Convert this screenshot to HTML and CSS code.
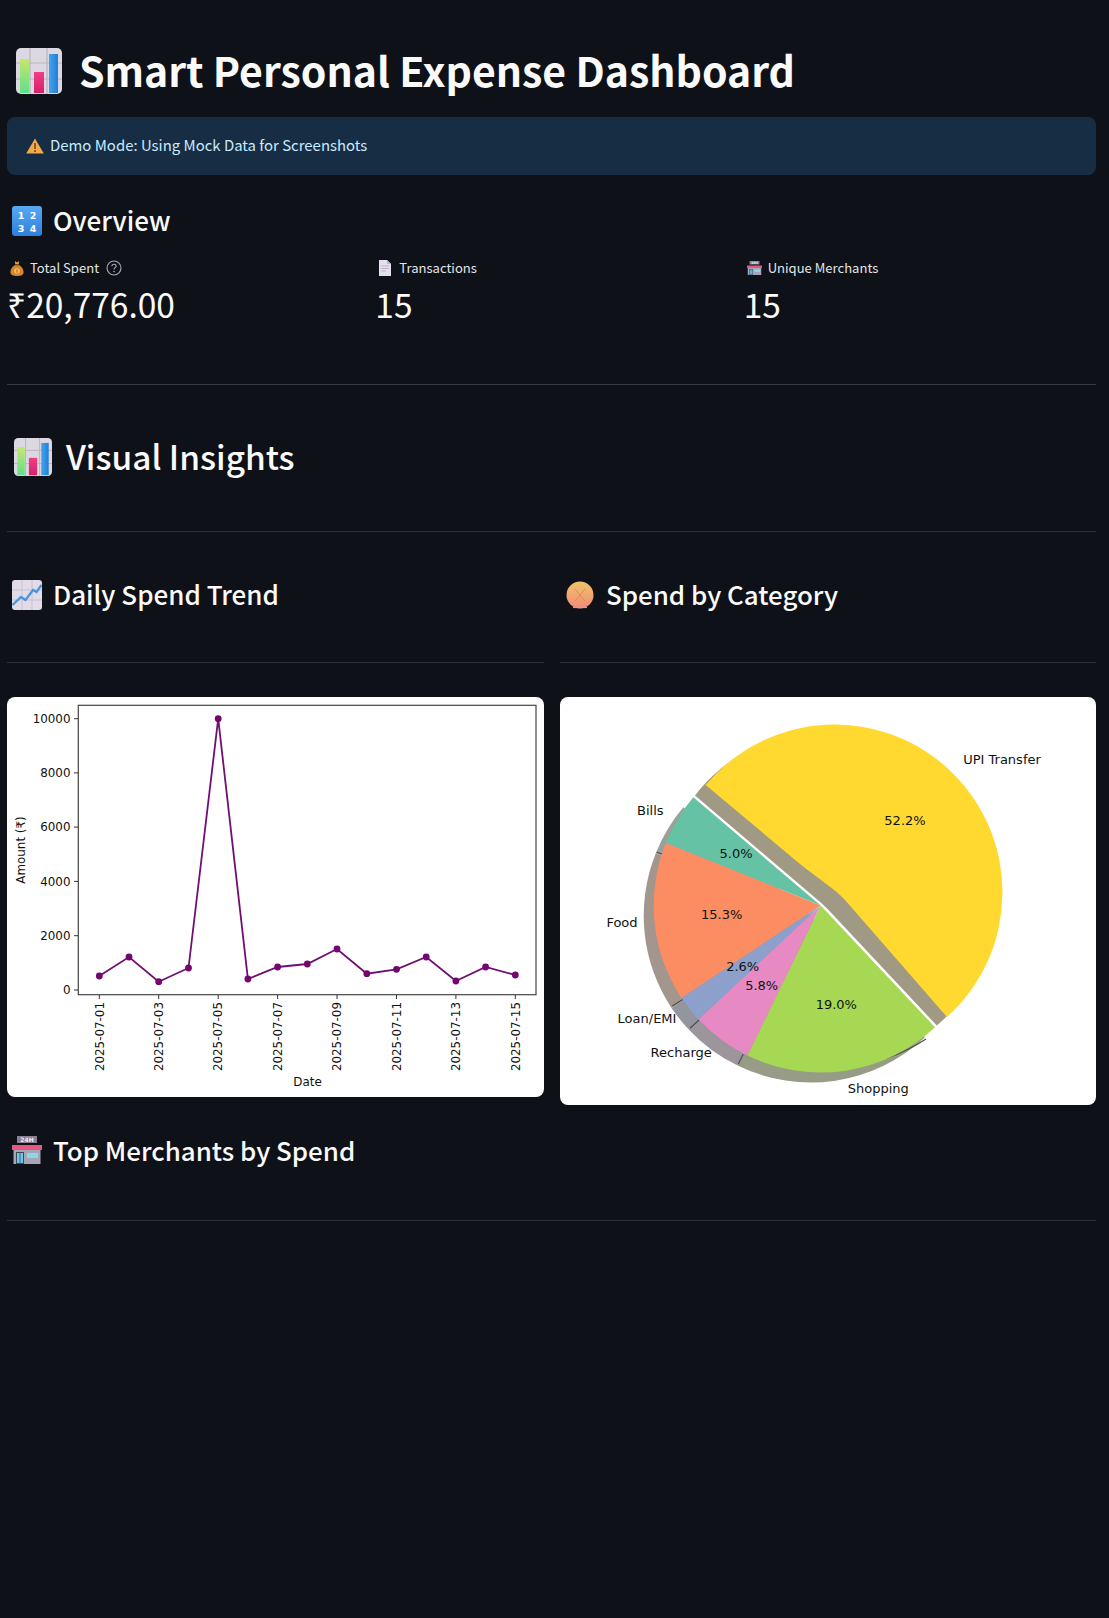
FILE: index.html
```html
<!DOCTYPE html>
<html lang="en">
<head>
<meta charset="utf-8">
<title>Smart Personal Expense Dashboard</title>
<link rel="stylesheet" href="styles.css">
</head>
<body>
<svg class="defs" width="0" height="0" aria-hidden="true">
  <defs>
    <linearGradient id="gGreen" x1="0" y1="0" x2="0" y2="1"><stop offset="0" stop-color="#c6e86a"/><stop offset="1" stop-color="#5fe08a"/></linearGradient>
    <linearGradient id="gPink" x1="0" y1="0" x2="0" y2="1"><stop offset="0" stop-color="#ef3f86"/><stop offset="1" stop-color="#d81f6a"/></linearGradient>
    <linearGradient id="gBlue" x1="0" y1="0" x2="1" y2="0"><stop offset="0" stop-color="#45a4f0"/><stop offset="1" stop-color="#1f7fd6"/></linearGradient>
    <linearGradient id="gKey" x1="0" y1="0" x2="0" y2="1"><stop offset="0" stop-color="#58a9f2"/><stop offset="1" stop-color="#2f7fdc"/></linearGradient>
    <linearGradient id="gPie" x1="0" y1="0" x2="0" y2="1"><stop offset="0" stop-color="#f0c468"/><stop offset="1" stop-color="#f58a78"/></linearGradient>
    <symbol id="e-chart" viewBox="0 0 46 46">
      <rect x="0" y="0" width="46" height="46" rx="5" fill="#dcd8e2"/>
      <path d="M14 0V46M31 0V46M0 15H46M0 31H46" stroke="#b9b5c0" stroke-width="1.2"/>
      <rect x="4" y="11" width="9" height="34" fill="url(#gGreen)"/>
      <rect x="18" y="24" width="10" height="21" fill="url(#gPink)"/>
      <rect x="33" y="6" width="9" height="39" fill="url(#gBlue)"/>
    </symbol>
    <symbol id="e-money" viewBox="0 0 14 16">
      <path d="M5 1 7 2.6 9 1 8.8 4.6H5.2Z" fill="#e9a23b"/>
      <path d="M5 5C2 7 0.4 9.5 0.4 12 0.4 15 3 16 7 16S13.6 15 13.6 12C13.6 9.5 12 7 9 5Z" fill="#d98430"/>
      <rect x="5" y="4.3" width="4" height="1.2" fill="#7a4520"/>
      <circle cx="7" cy="11" r="2.8" fill="#f6c552"/>
      <path d="M7 9.3V12.8" stroke="#a05a1c" stroke-width="1"/>
    </symbol>
    <symbol id="e-doc" viewBox="0 0 12 16">
      <path d="M0 0H8L12 4V16H0Z" fill="#e6e0ee"/>
      <path d="M8 0V4H12Z" fill="#bdb5c9"/>
      <path d="M2 6H10M2 8.5H10M2 11H7" stroke="#bdb5c9" stroke-width="1"/>
    </symbol>
    <symbol id="e-store" viewBox="0 0 30 28">
      <rect x="5" y="0" width="20" height="7" fill="#8a7f92"/>
      <rect x="0" y="9" width="30" height="5" fill="#e5587f"/>
      <rect x="1.5" y="14" width="27" height="14" fill="#a9a4b5"/>
      <rect x="4" y="16" width="8" height="12" fill="#3f4654"/>
      <rect x="5" y="17" width="2.6" height="10" fill="#6dc8ee"/>
      <rect x="8.4" y="17" width="2.6" height="10" fill="#6dc8ee"/>
      <rect x="15" y="17" width="11" height="5" fill="#84dbe8"/>
      <text x="15" y="6" class="e-24h">24H</text>
    </symbol>
    <symbol id="e-trend" viewBox="0 0 30 30">
      <rect width="30" height="30" rx="3" fill="#e2dbe8"/>
      <path d="M10 0V30M20 0V30M0 10H30M0 20H30" stroke="#c9c1d2" stroke-width="1"/>
      <path d="M0.5 25 9 17 13.5 20 21 10 24.5 12 29.5 5" fill="none" stroke="#4b93d8" stroke-width="2.2"/>
    </symbol>
    <symbol id="e-pie" viewBox="0 0 28 28">
      <circle cx="14" cy="14" r="13.5" fill="url(#gPie)"/>
      <path d="M9 8 19 20M19 8 9 20" stroke="#d9805f" stroke-width="0.8"/>
      <path d="M7 26.5H21" stroke="#b9a9b5" stroke-width="1.2"/>
    </symbol>
    <symbol id="e-warn" viewBox="0 0 18 16">
      <path d="M9 0.5 17.8 15.5H0.2Z" fill="#f5a84a"/>
      <path d="M9 5V11" stroke="#6b4a22" stroke-width="1.6"/>
      <circle cx="9" cy="13" r="1" fill="#6b4a22"/>
    </symbol>
    <symbol id="e-keys" viewBox="0 0 30 30">
      <rect width="30" height="30" rx="3" fill="url(#gKey)"/>
      <text x="9" y="12.5" class="e-key">1</text><text x="21" y="12.5" class="e-key">2</text>
      <text x="9" y="25.5" class="e-key">3</text><text x="21" y="25.5" class="e-key">4</text>
    </symbol>
  </defs>
</svg>

<main class="page">
  <h1 class="title"><svg class="ico-title"><use href="#e-chart"/></svg><span>Smart Personal Expense Dashboard</span></h1>

  <div class="alert"><svg class="ico-warn"><use href="#e-warn"/></svg><span>Demo Mode: Using Mock Data for Screenshots</span></div>

  <h3 class="sub sub-overview"><svg class="ico-sub"><use href="#e-keys"/></svg><span>Overview</span></h3>

  <section class="metrics">
    <div class="metric">
      <div class="metric-label"><svg class="ico-money"><use href="#e-money"/></svg><span>Total Spent</span>
        <svg class="help" viewBox="0 0 16 16"><circle cx="8" cy="8" r="7" fill="none" stroke="#a9abb1" stroke-width="1.1"/><path d="M5.9 6.3C5.9 5 6.9 4.3 8 4.3S10.1 5 10.1 6.2C10.1 7.6 8 7.7 8 9.4" fill="none" stroke="#a9abb1" stroke-width="1.1"/><circle cx="8" cy="11.5" r=".8" fill="#a9abb1"/></svg>
      </div>
      <div class="metric-value">₹20,776.00</div>
    </div>
    <div class="metric">
      <div class="metric-label"><svg class="ico-doc"><use href="#e-doc"/></svg><span>Transactions</span></div>
      <div class="metric-value">15</div>
    </div>
    <div class="metric">
      <div class="metric-label"><svg class="ico-store"><use href="#e-store"/></svg><span>Unique Merchants</span></div>
      <div class="metric-value">15</div>
    </div>
  </section>

  <hr class="rule rule-metrics">

  <h2 class="section"><svg class="ico-section"><use href="#e-chart"/></svg><span>Visual Insights</span></h2>

  <hr class="rule rule-section">

  <section class="columns">
    <div class="col">
      <h3 class="sub"><svg class="ico-sub"><use href="#e-trend"/></svg><span>Daily Spend Trend</span></h3>
      <hr class="rule rule-sub">
      <div class="plot plot-line">
        <svg class="chart" viewBox="7 697 537 400">
          <g class="spine">
            <rect x="78.3" y="705.3" width="457.7" height="289.4"/>
          </g>
          <path class="ticks" d="M78 990h-4M78 935.7h-4M78 881.4h-4M78 827.1h-4M78 772.9h-4M78 718.7h-4M99.3 995v4M158.7 995v4M218.2 995v4M277.6 995v4M337 995v4M396.5 995v4M455.9 995v4M515.3 995v4"/>
          <g class="tl tl-y">
            <text x="70.5" y="994.3">0</text>
            <text x="70.5" y="940">2000</text>
            <text x="70.5" y="885.7">4000</text>
            <text x="70.5" y="831.4">6000</text>
            <text x="70.5" y="777.2">8000</text>
            <text x="70.5" y="723">10000</text>
          </g>
          <g class="tl tl-x">
            <text transform="translate(103.5 1002) rotate(-90)">2025-07-01</text>
            <text transform="translate(162.9 1002) rotate(-90)">2025-07-03</text>
            <text transform="translate(222.4 1002) rotate(-90)">2025-07-05</text>
            <text transform="translate(281.8 1002) rotate(-90)">2025-07-07</text>
            <text transform="translate(341.2 1002) rotate(-90)">2025-07-09</text>
            <text transform="translate(400.7 1002) rotate(-90)">2025-07-11</text>
            <text transform="translate(460.1 1002) rotate(-90)">2025-07-13</text>
            <text transform="translate(519.5 1002) rotate(-90)">2025-07-15</text>
          </g>
          <text class="axis-label" x="307.5" y="1086.3">Date</text>
          <text class="axis-label" transform="translate(25.3 850) rotate(-90)">Amount (₹)</text>
          <polyline class="series" points="99.3,976 129,957 158.7,981.7 188.5,968 218.2,718.7 247.9,979 277.6,967 307.3,964 337,949 366.8,973.7 396.5,969.3 426.2,957 455.9,981 485.6,967 515.3,975"/>
          <g class="dots">
            <circle cx="99.3" cy="976"/><circle cx="129" cy="957"/><circle cx="158.7" cy="981.7"/><circle cx="188.5" cy="968"/><circle cx="218.2" cy="718.7"/><circle cx="247.9" cy="979"/><circle cx="277.6" cy="967"/><circle cx="307.3" cy="964"/><circle cx="337" cy="949"/><circle cx="366.8" cy="973.7"/><circle cx="396.5" cy="969.3"/><circle cx="426.2" cy="957"/><circle cx="455.9" cy="981"/><circle cx="485.6" cy="967"/><circle cx="515.3" cy="975"/>
          </g>
        </svg>
      </div>
    </div>
    <div class="col">
      <h3 class="sub sub-pie"><svg class="ico-pie"><use href="#e-pie"/></svg><span>Spend by Category</span></h3>
      <hr class="rule rule-sub">
      <div class="plot plot-pie">
        <svg class="chart" viewBox="560 697 536 408">
          <g class="shadows">
            <path class="sh-upi" d="M695 795.4L816 898.5Q823 904 829 910.5L936.8 1025.6A167.8 167.8 0 1 0 695 795.4Z"/>
            <path class="sh-slice" d="M810.7 915.5L683.3 807.3A167 167 0 0 0 655.9 853Z"/>
            <path class="sh-food" d="M810.7 915.5L655.9 853A167 167 0 0 0 671.5 1007.9Z"/>
            <path class="sh-loan" d="M810.7 915.5L671.5 1007.9A167 167 0 0 0 688.7 1029.5Z"/>
            <path class="sh-rech" d="M810.7 915.5L688.7 1029.5A167 167 0 0 0 737.5 1065.6Z"/>
            <path class="sh-shop" d="M810.7 915.5L737.5 1065.6A167 167 0 0 0 925 1037.3Z"/>
          </g>
          <path class="tick-dark" d="M656.7 852.3 662 854M672.3 1006 683.3 999.3M690 1028.3 699 1020M738.3 1064 743.3 1054M926 1039A167 167 0 0 1 887 1058"/>
          <path class="w-bills" d="M820.7 905.5L693.3 797.3A167 167 0 0 0 665.9 843Z"/>
          <path class="w-food" d="M820.7 905.5L665.9 843A167 167 0 0 0 681.5 997.9Z"/>
          <path class="w-loan" d="M820.7 905.5L681.5 997.9A167 167 0 0 0 698.7 1019.5Z"/>
          <path class="w-rech" d="M820.7 905.5L698.7 1019.5A167 167 0 0 0 747.5 1055.6Z"/>
          <path class="w-shop" d="M820.7 905.5L747.5 1055.6A167 167 0 0 0 935 1027.3Z"/>
          <path class="w-upi" d="M800 864C820 880 835 889 845 900L947 1017A167.8 167.8 0 1 0 705.7 785Z"/>
          <g class="pie-text">
            <text x="650.3" y="814.5">Bills</text>
            <text x="622" y="927.2">Food</text>
            <text x="647" y="1023.2">Loan/EMI</text>
            <text x="681.2" y="1057.2">Recharge</text>
            <text x="878.3" y="1093.2">Shopping</text>
            <text x="1002" y="763.8">UPI Transfer</text>
            <text x="905" y="825.2">52.2%</text>
            <text x="736" y="857.8">5.0%</text>
            <text x="721.7" y="919.2">15.3%</text>
            <text x="742.7" y="971.2">2.6%</text>
            <text x="761.7" y="989.8">5.8%</text>
            <text x="836.3" y="1008.8">19.0%</text>
          </g>
        </svg>
      </div>
    </div>
  </section>

  <h3 class="sub sub-merchants"><svg class="ico-sub"><use href="#e-store"/></svg><span>Top Merchants by Spend</span></h3>
  <hr class="rule rule-merchants">
</main>
</body>
</html>
```

FILE: styles.css
```css
* { box-sizing: border-box; }
html, body { margin: 0; background: #0e1117; }
body {
  color: #fafafa;
  font-family: "Noto Sans CJK SC", "Noto Sans CJK JP", "Noto Sans", sans-serif;
}
.defs { position: absolute; }
.page { width: 1109px; height: 1618px; padding: 0 13px 0 7px; overflow: hidden; }

.title {
  display: flex; align-items: center; gap: 17px;
  height: 64px; margin: 39px 0 0; padding-left: 9px;
  font-size: 41px; font-weight: 700; line-height: 64px;
}
.title span { margin-bottom: 4px; }
.ico-title { width: 46px; height: 46px; flex: none; }

.alert {
  display: flex; align-items: center; gap: 6px;
  height: 58px; margin-top: 14px; padding-left: 19px;
  border-radius: 8px; background: #172d43; color: #c7ebff;
  font-size: 14.93px; line-height: 24px;
}
.alert span { margin-bottom: 2px; }
.ico-warn { width: 18px; height: 16px; flex: none; }

.sub {
  display: flex; align-items: center; gap: 11px;
  height: 40px; margin: 0; padding-left: 5px;
  font-size: 26px; font-weight: 500; line-height: 40px;
}
.sub span { margin-bottom: 2px; }
.sub-overview { margin-top: 26px; }
.sub-pie { gap: 12px; padding-left: 6px; font-size: 25.9px; }
.sub-merchants { margin-top: 25px; font-size: 25.9px; }
.sub-merchants span { margin-bottom: 0; }
.ico-sub { width: 30px; height: 30px; flex: none; }
.ico-pie { width: 28px; height: 28px; flex: none; }

.metrics { display: grid; grid-template-columns: repeat(3, 1fr); gap: 16px; margin-top: 15px; }
.metric-label {
  display: flex; align-items: center; gap: 6px;
  height: 24px; padding-left: 3px;
  font-size: 13.06px; line-height: 24px; color: #e4e5e7;
}
.ico-money { width: 14px; height: 16px; flex: none; }
.ico-doc { width: 12px; height: 16px; flex: none; margin-right: 2px; margin-left: 1px; }
.ico-store { width: 15px; height: 14px; flex: none; }
.help { width: 16px; height: 16px; margin-left: 1px; flex: none; }
.metric-value { font-size: 33.5px; font-weight: 400; line-height: 50px; margin-top: -1px; }

.rule { height: 1px; margin: 0; border: 0; background: #2f3139; }
.rule-metrics { margin-top: 55px; background: #36383f; }

.section {
  display: flex; align-items: center; gap: 14px;
  height: 50px; margin: 47px 0 0; padding-left: 7px;
  font-size: 33.4px; font-weight: 500; line-height: 50px;
}
.section span { margin-bottom: 2px; }
.ico-section { width: 38px; height: 38px; flex: none; }
.rule-section { margin-top: 49px; }

.columns { display: grid; grid-template-columns: 537fr 536fr; gap: 16px; margin-top: 43px; }
.rule-sub { margin-top: 47px; }
.rule-merchants { margin-top: 50px; }

.plot { margin-top: 34px; overflow: hidden; border-radius: 8px; background: #fff; }
.plot-line { height: 400px; }
.plot-pie { height: 408px; }
.chart { display: block; width: 100%; height: 100%; }

.spine rect { fill: #fff; stroke: #444; stroke-width: 1.2; }
.ticks { fill: none; stroke: #333; stroke-width: 1; }
.tl text, .axis-label, .pie-text text { font-family: "DejaVu Sans", sans-serif; fill: #111; }
.tl text { font-size: 11.9px; }
.tl-y text { text-anchor: end; }
.tl-x text { text-anchor: end; }
.axis-label { font-size: 11.9px; text-anchor: middle; }
.series { fill: none; stroke: #6f0f72; stroke-width: 1.8; }
.dots circle { r: 3.4px; fill: #73066f; }

.sh-upi { fill: #a09a85; }
.sh-slice { fill: #9aa09a; }
.sh-food { fill: #a3968f; }
.sh-loan { fill: #94969e; }
.sh-rech { fill: #9c959c; }
.sh-shop { fill: #979c86; }
.tick-dark { fill: none; stroke: #4c4c4c; stroke-width: 1.2; }
.w-bills { fill: #66c2a5; }
.w-food { fill: #fc8d62; }
.w-loan { fill: #8da0cb; }
.w-rech { fill: #e78ac3; }
.w-shop { fill: #a6d854; }
.w-upi { fill: #ffd92f; }
.pie-text text { font-size: 13px; text-anchor: middle; }

.e-24h { font: 700 6px "DejaVu Sans", sans-serif; fill: #f2eef6; text-anchor: middle; }
.e-key { font: 700 9.5px "DejaVu Sans", sans-serif; fill: #fff; text-anchor: middle; }
```
